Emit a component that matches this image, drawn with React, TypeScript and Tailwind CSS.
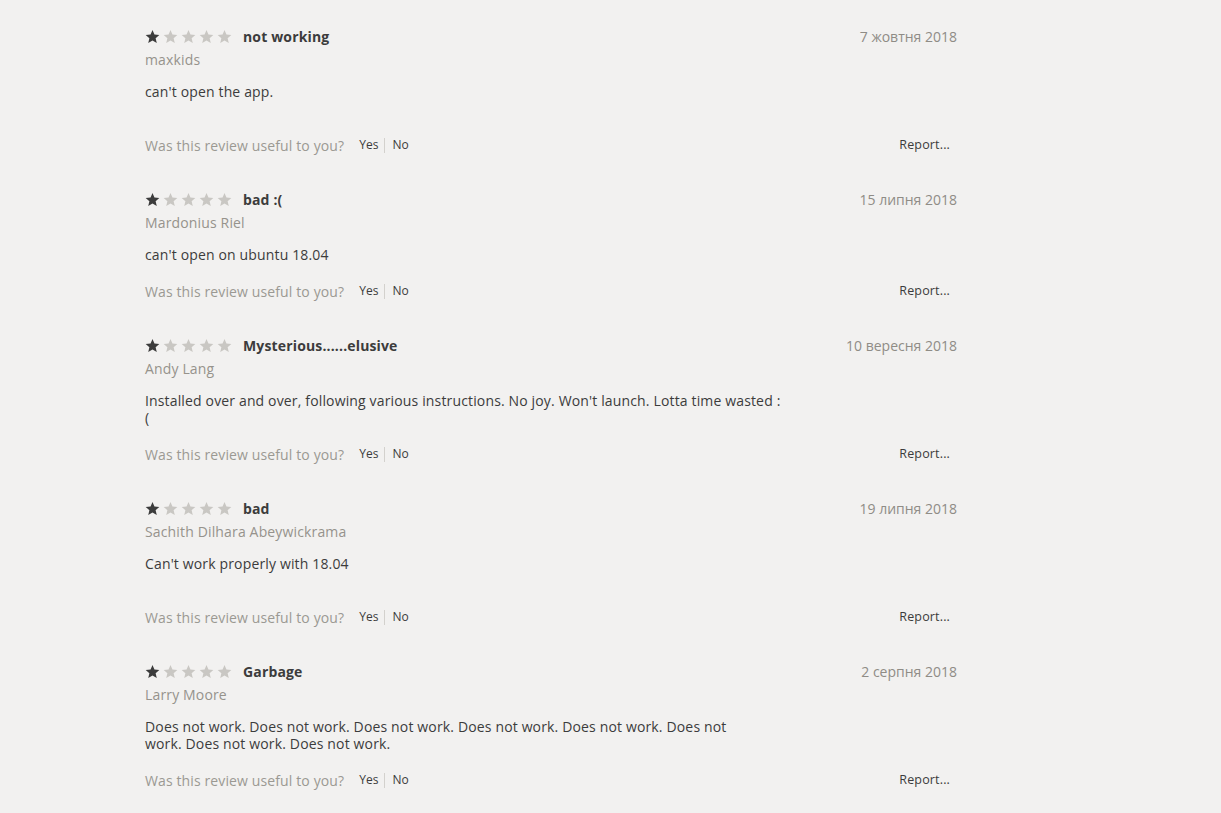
const reviews = [
  {
    title: "not working",
    author: "maxkids",
    date: "7 жовтня 2018",
    lines: ["can't open the app.", ""],
  },
  {
    title: "bad :(",
    author: "Mardonius Riel",
    date: "15 липня 2018",
    lines: ["can't open on ubuntu 18.04"],
  },
  {
    title: "Mysterious......elusive",
    author: "Andy Lang",
    date: "10 вересня 2018",
    lines: [
      "Installed over and over, following various instructions. No joy. Won't launch. Lotta time wasted :",
      "(",
    ],
  },
  {
    title: "bad",
    author: "Sachith Dilhara Abeywickrama",
    date: "19 липня 2018",
    lines: ["Can't work properly with 18.04", ""],
  },
  {
    title: "Garbage",
    author: "Larry Moore",
    date: "2 серпня 2018",
    lines: [
      "Does not work. Does not work. Does not work. Does not work. Does not work. Does not",
      "work. Does not work. Does not work.",
    ],
  },
];

const Star = ({ filled }: { filled: boolean }) => (
  <svg
    viewBox="0 0 24 24"
    className={filled ? "w-[15px] h-[15px] fill-[#3c3c3c]" : "w-[15px] h-[15px] fill-[#c9c7c3]"}
  >
    <path d="M12 1.5l3.1 7.2 7.8.7-5.9 5.2 1.8 7.7L12 18.3l-6.8 4 1.8-7.7-5.9-5.2 7.8-.7z" />
  </svg>
);

const Review = ({ r }: { r: (typeof reviews)[number] }) => (
  <div className="mb-[34px]">
    <div className="flex justify-between items-center h-5">
      <div className="flex items-center">
        <div className="flex gap-[3px]">
          {[0, 1, 2, 3, 4].map((i) => (
            <Star key={i} filled={i === 0} />
          ))}
        </div>
        <span className="ml-[11px] text-[14px] font-bold text-[#3c3c3c]">{r.title}</span>
      </div>
      <span className="text-[14px] tracking-normal text-[#8f8c86]">{r.date}</span>
    </div>
    <div className="mt-[3px] h-5 flex items-center text-[14px] text-[#96938c]">{r.author}</div>
    <div className="mt-[14px] text-[14px] leading-[17px] text-[#3c3c3c]">
      {r.lines.map((l, i) => (
        <div key={i} className="h-[17px] whitespace-nowrap">
          {l}
        </div>
      ))}
    </div>
    <div className="mt-[18px] h-5 flex items-center justify-between">
      <div className="flex items-center tracking-normal">
        <span className="text-[14px] tracking-[0.12px] text-[#9b9993]">Was this review useful to you?</span>
        <span className="ml-[15px] text-[12px] text-[#3c3c3c]">Yes</span>
        <span className="ml-[6px] mr-[7px] w-px h-[15px] bg-[#d3d1cd]" />
        <span className="text-[12px] text-[#3c3c3c]">No</span>
      </div>
      <span className="mr-[7px] text-[12.5px] text-[#3c3c3c]">Report...</span>
    </div>
  </div>
);

export default function App() {
  return (
    <div
      className="min-h-screen bg-[#f2f1f0] pt-[26px] tracking-[0.15px]"
      style={{ fontFamily: '"Open Sans", sans-serif' }}
    >
      <div className="ml-[145px] w-[812px]">
        {reviews.map((r, i) => (
          <Review key={i} r={r} />
        ))}
      </div>
    </div>
  );
}
